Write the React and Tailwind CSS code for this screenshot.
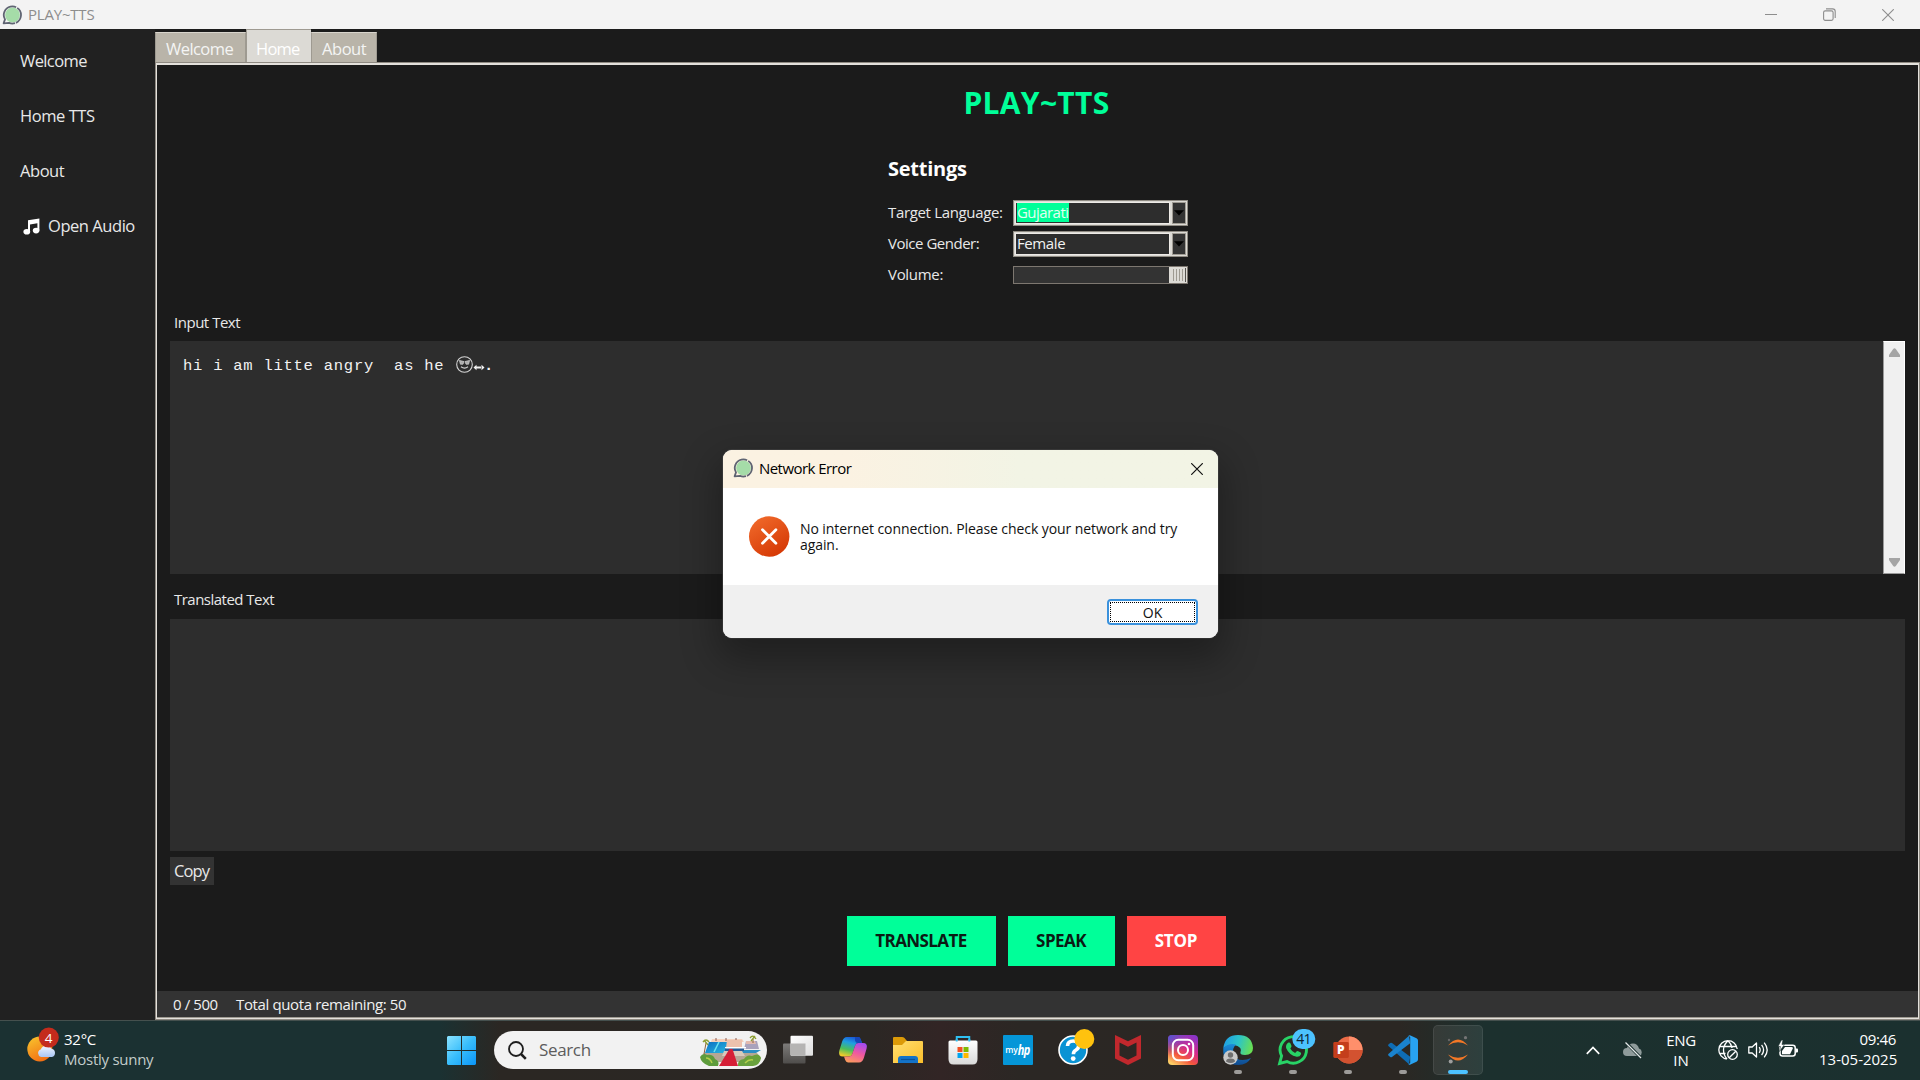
import React from "react";

const AppIcon = ({ className }) => (
  <svg viewBox="0 0 20 20" className={className}>
    <circle cx="10.5" cy="10" r="7.4" fill="#a5dca8" />
    <path d="M1.6 18.3 3 14.4A8.6 8.6 0 1 1 7 17.9Z" fill="none" stroke="#5f6472" strokeWidth="1.8" strokeLinejoin="round" strokeDasharray="26 1.2 18 1" />
  </svg>
);

const TitleBar = () => (
  <header className="flex h-[29px] items-center bg-[#f3f3f3] text-[#8d8d8d]">
    <AppIcon className="ml-[2px] h-5 w-5 shrink-0" />
    <span className="-mt-[2px] ml-[6px] text-[15px] leading-5 tracking-[-0.2px]">PLAY~TTS</span>
    <div className="ml-auto flex items-center">
      <svg className="mr-[46px] h-3 w-3" viewBox="0 0 12 12" stroke="#8d8d8d"><path d="M0 5.5h12" /></svg>
      <svg className="mr-[46px] h-[13px] w-[13px]" viewBox="0 0 13 13" fill="none" stroke="#8d8d8d" strokeWidth="1.1">
        <rect x="0.6" y="2.9" width="9.5" height="9.5" rx="1.6" />
        <path d="M3 .9h6.6a2.6 2.6 0 0 1 2.6 2.6V10" />
      </svg>
      <svg className="mr-[26px] h-3 w-3" viewBox="0 0 12 12" stroke="#8d8d8d" strokeWidth="1.1"><path d="M.2.2l11.6 11.6M11.8.2.2 11.8" /></svg>
    </div>
  </header>
);

const Sidebar = () => (
  <nav className="flex w-[155px] shrink-0 flex-col bg-[#212121] pl-5 pt-[5px] text-[16.5px] text-[#e8e8e8]">
    <div className="flex h-[55px] items-center tracking-[-0.6px]">Welcome</div>
    <div className="flex h-[55px] items-center tracking-[-0.45px]">Home TTS</div>
    <div className="flex h-[55px] items-center tracking-[-0.45px]">About</div>
    <div className="flex h-[55px] items-center tracking-[-0.45px]">
      <svg className="-mt-px ml-[3px] h-[17px] w-[17px]" viewBox="0 0 17 17" fill="#fff">
        <path d="M5 2.2 16.4.4v12.2h-2V5.2L7 6.4v7.4H5z" />
        <ellipse cx="3.8" cy="13.8" rx="3.4" ry="2.8" />
        <ellipse cx="13.1" cy="12.6" rx="3.3" ry="2.8" />
      </svg>
      <span className="ml-[8px]">Open Audio</span>
    </div>
  </nav>
);

const Tabs = () => (
  <div className="flex h-[33px] items-end text-[16.5px] leading-6 text-[#f4f4f4]">
    <div className="flex h-[30px] w-[91px] items-center border border-b-0 border-[#9e9a91] border-t-[#d8d4cc] bg-[#b9b4a9] pl-[10px] pt-[3px] tracking-[-0.55px]">Welcome</div>
    <div className="flex h-[33px] w-[65px] items-center border-l border-t border-[#9e9a91] bg-[#dcdad5] pl-[9px] pt-[6px] tracking-[-0.75px] text-white">Home</div>
    <div className="flex h-[30px] w-[66px] items-center border border-b-0 border-[#9e9a91] border-t-[#d8d4cc] bg-[#b9b4a9] pl-[10px] pt-[3px] tracking-[-0.45px]">About</div>
  </div>
);

const Combo = ({ children }) => (
  <div className="flex h-[26px] w-[175px] border border-[#8f8b83] bg-[#dcdad5]">
    <div className="m-px mr-0 flex w-[155px] items-center border border-[#eeebe7] bg-[#2d2d2d] pl-px text-[15px] leading-[19px] text-[#f2f2f2]">{children}</div>
    <div className="my-px ml-[2px] flex w-[14px] items-center justify-center border border-[#a09c94] bg-[#333]">
      <svg className="h-[6px] w-[10px] shrink-0" viewBox="0 0 10 6"><path d="M0 .3h10L5 5.5z" fill="#000" /></svg>
    </div>
  </div>
);

const Settings = () => (
  <section className="ml-[731px] mt-[33px] w-[301px] text-[#e8e8e8]">
    <h2 className="flex h-7 items-center text-xl font-bold tracking-[-0.25px] text-white">Settings</h2>
    <div className="mt-[14px] text-[15px]">
      <div className="flex h-[31px] items-center">
        <div className="w-[125px] tracking-[-0.34px]">Target Language:</div>
        <Combo><span className="whitespace-nowrap bg-[#00ff99] pr-px tracking-[-0.55px] text-[#e2fff2]">Gujarati</span></Combo>
      </div>
      <div className="flex h-[31px] items-center">
        <div className="w-[125px] tracking-[-0.48px]">Voice Gender:</div>
        <Combo><span className="tracking-[-0.4px]">Female</span></Combo>
      </div>
      <div className="flex h-[31px] items-center">
        <div className="w-[125px] tracking-[-0.3px]">Volume:</div>
        <div className="flex h-[18px] w-[175px] justify-end border border-[#7d7770] bg-[#333]">
          <svg className="h-4 w-[18px]" viewBox="0 0 18 16">
            <rect width="18" height="16" fill="#dcdad5" />
            <path d="M4.5 2v12M7.5 2v12M10.5 2v12M13.5 2v12" stroke="#9e9a91" />
            <path d="M16.5 1v14" stroke="#55524d" />
          </svg>
        </div>
      </div>
    </div>
  </section>
);

const InputArea = () => (
  <div className="mt-[8px] flex h-[233px] bg-[#2d2d2d]">
    <div className="flex flex-1 items-start whitespace-pre pl-[13px] pt-[15px] font-['Liberation_Mono',monospace] text-[15.5px] leading-5 text-[#f2f2f2]">
      <span className="w-[273px] tracking-[0.75px]">{"hi i am litte angry  as he"}</span>
      <svg className="h-[17px] w-[17px]" viewBox="0 0 17 17" fill="none" stroke="#d4d4d4" strokeWidth="1.1">
        <circle cx="8.5" cy="8.5" r="7.8" />
        <path d="M3.400 4.400 8 5.600 7 8.200H4.400zM13.600 4.400 9 5.600l1 2.600h2.600z" fill="#aaa" strokeWidth=".7" />
        <path d="M5 10.800q3.500 2.600 7 0" />
      </svg>
      <svg className="mt-[8px] h-[7px] w-[12px]" viewBox="0 0 12 7" fill="#f2f2f2"><path d="M.5 3.500 3.500.8v5.400zM11.500 3.500 8.500.8v5.400zM3 2.600h6v1.800H3z" /></svg>
      <span className="-ml-px font-bold">.</span>
    </div>
    <div className="flex w-[22px] flex-col items-center justify-between border border-b-[#9a9a9a] border-l-[#9a9a9a] border-r-white border-t-white bg-[#f0f0f0] py-[6px]">
      <svg className="h-[9px] w-[11px]" viewBox="0 0 11 9" fill="#a5a5a5"><path d="M4.2 1Q5.5-.6 6.8 1L11 7v2H0V7z" /></svg>
      <svg className="h-[9px] w-[11px] rotate-180" viewBox="0 0 11 9" fill="#a5a5a5"><path d="M4.2 1Q5.5-.6 6.8 1L11 7v2H0V7z" /></svg>
    </div>
  </div>
);

const Notebook = () => (
  <main className="flex flex-1 flex-col bg-[#1b1b1b]">
    <Tabs />
    <div className="flex flex-1 flex-col border border-[#8f8a82]">
      <div className="flex flex-1 flex-col border border-t-2 border-[#e4e1dc]">
        <div className="flex flex-1 flex-col border-b border-[#9e9a91]">
          <h1 className="mr-[2px] mt-[17px] flex h-10 items-center justify-center text-[30px] font-bold tracking-[0.3px] text-[#00ff99]">PLAY~TTS</h1>
          <Settings />
          <div className="mx-[13px] flex flex-col text-[15px] text-[#e8e8e8]">
            <div className="ml-1 mt-[21px] flex h-[22px] items-center tracking-[-0.48px]">Input Text</div>
            <InputArea />
            <div className="ml-1 mt-[14px] flex h-[22px] items-center tracking-[-0.52px]">Translated Text</div>
            <div className="mt-[9px] h-[232px] bg-[#2d2d2d]" />
            <button className="mt-[6px] flex h-7 w-11 items-center bg-[#333] pl-1 text-[16.5px] tracking-[-0.85px]">Copy</button>
          </div>
          <div className="mr-[3px] mt-[31px] flex h-[50px] justify-center gap-3 text-[17px] font-bold text-[#0b1a14]">
            <button className="flex w-[149px] items-center justify-center bg-[#00ff99] tracking-[-0.58px]">TRANSLATE</button>
            <button className="flex w-[107px] items-center justify-center bg-[#00ff99] tracking-[-0.55px]">SPEAK</button>
            <button className="flex w-[99px] items-center justify-center bg-[#ff4444] tracking-[-0.2px] text-white">STOP</button>
          </div>
          <footer className="mt-auto flex h-[26px] items-center bg-[#333] pl-[16px] text-[15px] text-[#f0f0f0]">
            <span className="w-[63px] tracking-[-0.4px]">0 / 500</span>
            <span className="tracking-[-0.37px]">Total quota remaining: 50</span>
          </footer>
        </div>
      </div>
    </div>
  </main>
);

const Dialog = () => (
  <div role="dialog" className="absolute left-[723px] top-[450px] flex h-[188px] w-[495px] flex-col overflow-hidden rounded-[9px] bg-white text-[#111] shadow-[0_16px_36px_6px_rgba(0,0,0,0.3),0_0_0_1px_rgba(70,70,70,0.7)]">
    <div className="flex h-[38px] items-center bg-gradient-to-r from-[#fbf2e2] from-25% to-[#f2f4e5] to-60% pl-[10px] pr-[15px] text-[15px]">
      <AppIcon className="-mt-[2px] h-5 w-5" />
      <span className="-mt-[2px] ml-[6px] tracking-[-0.55px] text-black">Network Error</span>
      <svg className="ml-auto h-3 w-3" viewBox="0 0 12 12" stroke="#111" strokeWidth="1.2"><path d="M.2.2l11.6 11.6M11.8.2.2 11.8" /></svg>
    </div>
    <div className="flex h-[97px] pl-[26px] pt-[28px]">
      <svg className="h-[41px] w-[41px]" viewBox="0 0 41 41">
        <defs><linearGradient id="err" x1="0.2" y1="0" x2="0.8" y2="1"><stop stopColor="#f0692a" /><stop offset="1" stopColor="#d43603" /></linearGradient></defs>
        <circle cx="20.2" cy="20.5" r="20.2" fill="url(#err)" />
        <path d="M13.500 13.800l13.400 13.400M26.900 13.800 13.500 27.200" stroke="#fff" strokeWidth="2.800" strokeLinecap="round" />
      </svg>
      <p className="ml-[10px] mt-[5px] whitespace-nowrap text-[14px] leading-4 tracking-[-0.08px]">
        No internet connection. Please check your network and try<br />again.
      </p>
    </div>
    <div className="flex flex-1 justify-end bg-[#f0f0f0] pr-5 pt-[14px]">
      <button className="h-[26px] w-[91px] rounded-[4px] border-2 border-[#3a91dc] bg-white p-px">
        <div className="flex h-full items-center justify-center border border-dotted border-black text-[14px]">OK</div>
      </button>
    </div>
  </div>
);

const Weather = () => (
  <div className="flex w-[447px] items-center pl-[26px]">
    <svg className="-mt-[3px] h-[38px] w-[34px] overflow-visible" viewBox="0 0 34 38">
      <defs>
        <linearGradient id="sun" x1=".2" y1="0" x2=".7" y2="1"><stop stopColor="#f8c12c" /><stop offset="1" stopColor="#f26a12" /></linearGradient>
        <linearGradient id="cl" x1="0" y1="0" x2="0" y2="1"><stop stopColor="#f1f6ff" /><stop offset="1" stopColor="#a9c6f5" /></linearGradient>
      </defs>
      <circle cx="13.800" cy="19" r="12.500" fill="url(#sun)" />
      <path d="M15 27a4 4 0 0 1-.3-7.600 6 6 0 0 1 10.800-.6 4.200 4.200 0 0 1 .4 8.200z" fill="url(#cl)" />
      <circle cx="22.800" cy="7.600" r="10" fill="#c42b1c" />
      <text x="22.500" y="12.600" textAnchor="middle" fontSize="13.500" fill="#fff" fontFamily="Open Sans">4</text>
    </svg>
    <div className="-mt-[3px] ml-[4px] text-[15px] leading-5 text-white">
      <div className="tracking-[-0.25px]">32°C</div>
      <div className="tracking-[-0.26px] text-[#c3cccb]">Mostly sunny</div>
    </div>
  </div>
);

const Start = () => (
  <svg className="h-[29px] w-[29px] shrink-0" viewBox="0 0 29 29">
    <defs><linearGradient id="win" x1="0" y1="0" x2="1" y2="1"><stop stopColor="#8be3ff" /><stop offset=".5" stopColor="#38bdfb" /><stop offset="1" stopColor="#0a95f8" /></linearGradient></defs>
    <path d="M1 0h13v14H0V1zM15 0h13l1 1v13H15zM0 15h14v14H1l-1-1zM15 15h14v13l-1 1H15z" fill="url(#win)" />
  </svg>
);

const Villa = () => (
  <svg className="h-[31px] w-[62px]" viewBox="0 0 62 31">
    <defs><linearGradient id="gl" x1="0" y1="0" x2="1" y2="1"><stop stopColor="#0a6fc2" /><stop offset="1" stopColor="#2bb6e0" /></linearGradient></defs>
    <path d="M4 18h53l4 5-5 4H8l-6-5z" fill="#b5a796" />
    <path d="M12 4h30l2 3H11z" fill="#f4d0bc" /><path d="M16 3v3M26 3v3M36 3v3" stroke="#8a5a50" />
    <path d="M9 7h18v5l-3 6H5z" fill="url(#gl)" /><path d="M19 7l-5 10" stroke="#6be4f1" strokeWidth="1.500" />
    <path d="M27 5h15v8H26z" fill="#edc1ad" /><path d="M46 6h11l2 8H44z" fill="#a9a2bc" /><path d="M46 6h9l1 3H46z" fill="#e3b9ae" /><path d="M38 15h23l-5 3H40z" fill="#2a8fc6" />
    <path d="M25 12h21v1.500H25z" fill="#fff" /><path d="M25 13.500h19V16H25z" fill="#285a94" />
    <path d="M24 16h18l3 5H22z" fill="#d8cabb" />
    <path d="M29.500 14h3L38 31H19z" fill="#d61f36" />
    <path d="M0 22q3-5 7-2 6-1 8 4 5 2 3 7H9Q1 28 0 22z" fill="#5e9c3c" /><path d="M38 31q-1-6 6-7 3-5 8-3 7-4 9 2-1 7-8 8z" fill="#69a13c" />
    <path d="M6 23q4 0 6 5M45 28q4-4 8-3" stroke="#b3cf4b" fill="none" strokeWidth="1.500" />
    <path d="M6 8 4 19M53 4v4" stroke="#8a6440" /><path d="M3 7q3-4 6 0M4 5l4 5M50 3q3-4 6 1M51 6l4-5" stroke="#8c9e31" strokeWidth="1.300" fill="none" />
  </svg>
);

const Cell = ({ children, run }) => (
  <div className="relative flex w-[55px] items-center justify-center">
    {children}
    {run && <div className="absolute bottom-[6px] h-1 w-2 rounded-full bg-[#9d9b99]" />}
  </div>
);

const box = "-mt-px h-[30px] w-[30px] overflow-visible";

const Apps = () => (
  <>
    <Cell>
      <svg className={box} viewBox="0 0 30 30">
        <defs>
          <linearGradient id="tv" x1="0" y1="0" x2="1" y2="1"><stop stopColor="#fff" /><stop offset="1" stopColor="#dedede" /></linearGradient>
          <linearGradient id="tb" x1="0" y1="0" x2="0" y2="1"><stop stopColor="#7d7b79" /><stop offset="1" stopColor="#4f4d4b" /></linearGradient>
        </defs>
        <rect x="0" y="8.500" width="22.500" height="20" rx="1" fill="url(#tb)" />
        <rect x="7.500" y=".7" width="22.500" height="20" rx="1" fill="url(#tv)" />
        <path d="M7.500 8.500H22.500v12.200H8.500l-1-1z" fill="#b5b4b3" />
      </svg>
    </Cell>
    <Cell>
      <svg className={box} viewBox="0 0 30 30">
        <defs>
          <linearGradient id="c1" x1=".6" y1="0" x2=".3" y2="1"><stop stopColor="#1a58d8" /><stop offset=".3" stopColor="#1f9fe0" /><stop offset=".65" stopColor="#4bbf5a" /><stop offset="1" stopColor="#f6c92a" /></linearGradient>
          <linearGradient id="c2" x1=".7" y1="0" x2=".3" y2="1"><stop stopColor="#a44bf0" /><stop offset=".5" stopColor="#f0599f" /><stop offset="1" stopColor="#fb9a5e" /></linearGradient>
        </defs>
        <path d="M13 2h7q2 0 2.800 2.400L24 8h-4q-2 0-3 3l-2.500 7.500Q13.600 21.500 11 21.500H5Q0 21.500 1.200 16L4 7Q5.500 2 9 2z" fill="url(#c1)" />
        <path d="M17 2h3q2 0 2.800 2.400L24 8h-4q-2.500 0-3-2.500z" fill="#1646b8" />
        <path d="M17 27.500h-7q-2 0-2.800-2.400L6 21.500h5q2.500 0 3.400-3L17 11q1-3 3.500-3H25q5 0 3.600 5.500L26 22.500q-1.500 5-5 5z" fill="url(#c2)" />
      </svg>
    </Cell>
    <Cell>
      <svg className={box} viewBox="0 0 30 30">
        <defs><linearGradient id="fo" x1="0" y1="0" x2="1" y2="1"><stop stopColor="#ffdf70" /><stop offset="1" stopColor="#fcbe2b" /></linearGradient></defs>
        <path d="M0 3q0-1 1-1h8q1.500 0 2.500 1L14 6v6H0z" fill="#dc9a08" />
        <path d="M0 10h9l4-4h16q1 0 1 1v21H0z" fill="url(#fo)" />
        <path d="M5 28v-4q0-3 3-3h14q3 0 3 3v4z" fill="#1473c8" /><path d="M8 24.500h14" stroke="#0b5299" strokeWidth="1.200" />
      </svg>
    </Cell>
    <Cell>
      <svg className={box} viewBox="0 0 30 30">
        <defs><linearGradient id="st" x1="0" y1="0" x2="0" y2="1"><stop stopColor="#fff" /><stop offset="1" stopColor="#d9d9d9" /></linearGradient></defs>
        <path d="M8.700 7V2h12.600v5" stroke="#2fc0f2" strokeWidth="1.900" fill="none" />
        <path d="M.5 7q0-1.500 1.500-1.500h26Q29.500 5.500 29.500 7v17q0 5.500-5 5.500h-19Q.5 29.500.5 24z" fill="url(#st)" />
        <path d="M7.750 6.500V4h1.900v2.500M20.350 6.500V4h1.900v2.500" fill="#2fc0f2" />
        <path d="M9.500 12h5v5h-5z" fill="#f25022" /><path d="M15.500 12h5v5h-5z" fill="#7fba00" /><path d="M9.500 18h5v5h-5z" fill="#00a4ef" /><path d="M15.500 18h5v5h-5z" fill="#ffb900" />
      </svg>
    </Cell>
    <Cell>
      <div className="-mt-px flex h-[30px] w-[30px] items-center justify-center rounded-[1px] bg-[#0596d8] text-white">
        <span className="text-[8.5px] font-semibold tracking-[-0.2px]">my</span>
        <span className="inline-block origin-center scale-y-[1.25] text-[11px] font-bold italic tracking-[-0.6px]">hp</span>
      </div>
    </Cell>
    <Cell>
      <svg className={box} viewBox="0 0 30 30">
        <circle cx="15" cy="15" r="14" fill="#0a93d4" stroke="#fff" strokeWidth="1.600" />
        <path d="M9.500 11q.3-5 5.700-5 5.500 0 5.500 4.700 0 2.800-3 4.500-2.300 1.300-2.300 4" stroke="#fff" strokeWidth="3.600" fill="none" /><circle cx="15.200" cy="23.600" r="2.400" fill="#fff" />
        <circle cx="26.300" cy="4" r="10" fill="#ffc20e" />
      </svg>
    </Cell>
    <Cell>
      <svg className={box} viewBox="0 0 30 30"><path d="M2 0 15 6.300 28 0v23.500L15 30 2 23.500zM6.500 7.500v13L15 24.800l8.500-4.300v-13L15 11.700z" fill="#c1282d" fillRule="evenodd" /></svg>
    </Cell>
    <Cell>
      <svg className={box} viewBox="0 0 30 30">
        <defs>
          <linearGradient id="i1" x1=".8" y1="0" x2=".2" y2="1"><stop stopColor="#8a35c8" /><stop offset=".4" stopColor="#d62a8b" /><stop offset=".7" stopColor="#f4563c" /><stop offset="1" stopColor="#fdd067" /></linearGradient>
          <radialGradient id="i2" cx="0" cy="0" r=".7"><stop stopColor="#4a58d8" /><stop offset="1" stopColor="#4a58d8" stopOpacity="0" /></radialGradient>
        </defs>
        <rect width="30" height="30" rx="4" fill="url(#i1)" /><rect width="30" height="30" rx="4" fill="url(#i2)" />
        <rect x="4.800" y="4.800" width="20.400" height="20.400" rx="5.500" fill="none" stroke="#fff" strokeWidth="2" />
        <circle cx="15" cy="15" r="5" fill="none" stroke="#fff" strokeWidth="2" /><circle cx="21" cy="9" r="1.300" fill="#fff" />
      </svg>
    </Cell>
    <Cell run>
      <svg className={box} viewBox="0 0 30 30">
        <defs>
          <linearGradient id="e1" x1="0" y1=".3" x2="1" y2=".5"><stop stopColor="#1f9de6" /><stop offset=".5" stopColor="#2cc4c8" /><stop offset="1" stopColor="#69e052" /></linearGradient>
          <linearGradient id="e2" x1="0" y1="0" x2="0" y2="1"><stop stopColor="#1b8ddb" /><stop offset="1" stopColor="#0f4a8f" /></linearGradient>
        </defs>
        <path d="M.3 13Q2 0 15 0q14 0 15 13 0 7-8 7-5.500 0-4.500-3 1.500-4-3-6Q7 8 .3 13z" fill="url(#e1)" />
        <path d="M.3 13Q6 7.500 13 9.500 9 13 10.500 19q2 6 9 6 4.500 0 8.500-2-4 7-12.500 7Q-1 29.500.3 13z" fill="url(#e2)" />
        <circle cx="7.500" cy="22.500" r="7.200" fill="#c9c9c9" /><circle cx="7.500" cy="20" r="2.700" fill="#6f6f6f" /><path d="M3 26.500q0-3 4.500-3t4.500 3q-4 3-9 0z" fill="#6f6f6f" />
      </svg>
    </Cell>
    <Cell run>
      <svg className={box} viewBox="0 0 30 30">
        <path d="M1.600 28.400 3.600 21A13.200 13.200 0 1 1 9 26.500z" fill="none" stroke="#28d366" strokeWidth="2.900" />
        <path d="M10.500 7.500q1.300-.4 2 1l1 2.600q.2.900-1.200 2.400 1.600 3.200 4.800 4.500l1.700-1.700q.6-.5 1.400-.1l2.500 1.300q.6.500.3 1.800-1 2.700-4.300 2.500-7.500-1.400-10.600-8.800-.6-3.700 2.400-5.500z" fill="#28d366" />
        <rect x="14.300" y="-6" width="23" height="20" rx="10" fill="#4cc2ff" />
        <text x="25.500" y="9" textAnchor="middle" fontSize="14" letterSpacing="-0.8" fill="#0b2333" fontFamily="Open Sans">41</text>
      </svg>
    </Cell>
    <Cell run>
      <svg className={box} viewBox="0 0 30 30">
        <circle cx="16" cy="15" r="13.600" fill="#ed6c47" /><path d="M16 1.400A13.600 13.600 0 0 1 29.600 15H16z" fill="#ff8f6b" /><path d="M2.400 15h27.200a13.600 13.600 0 0 1-27.200 0z" fill="#d35230" />
        <rect x=".3" y="7" width="15.500" height="16" rx="1.400" fill="#c43e1c" />
        <text x="7.800" y="19.300" textAnchor="middle" fontSize="12" fontWeight="800" fill="#fff" fontFamily="Open Sans">P</text>
      </svg>
    </Cell>
    <Cell run>
      <svg className={box} viewBox="0 0 30 30">
        <path d="M2.200 8 .4 9.500q-.7.800 0 1.600L21 29.200l1.200-7.400L4 8q-1-.7-1.800 0z" fill="#0e6cb4" />
        <path d="M2.200 22 .4 20.500q-.7-.8 0-1.600L21 .8l1.200 7.400L4 22q-1 .7-1.800 0z" fill="#1a83ce" />
        <path d="M20.500.8Q21.300 0 22.500.4l6 2.900Q30 4 30 5.500v19q0 1.500-1.500 2.200l-6 2.900q-1.200.5-2-.4l1.700-1.200V2z" fill="#28a3f2" />
      </svg>
    </Cell>
    <div className="relative flex w-[55px] items-center justify-center">
      <div className="-mt-px flex h-[50px] w-[50px] items-center justify-center rounded-[5px] border border-white/8 bg-white/8">
        <svg className={box} viewBox="0 0 30 30">
          <path d="M5 10.500Q15-1.500 25 10.500 15 4 5 10.500zM5 19.500Q15 31.500 25 19.500 15 26 5 19.500z" fill="#f37726" />
          <circle cx="22.500" cy="2.700" r="1.600" fill="#757575" /><circle cx="6" cy="5" r="1.200" fill="#666" /><circle cx="7.700" cy="26.500" r="2" fill="#9e9e9e" />
        </svg>
      </div>
      <div className="absolute bottom-[6px] h-1 w-5 rounded-full bg-[#4cc2ff]" />
    </div>
  </>
);

const Tray = () => (
  <div className="ml-auto flex items-center pr-6 text-[15px] leading-5 text-white">
    <svg className="-mt-px h-[9px] w-[14px]" viewBox="0 0 14 9" fill="none" stroke="#fff" strokeWidth="1.700"><path d="M.8 7.800 7 1.500l6.200 6.300" /></svg>
    <svg className="-mt-px ml-[23px] h-[18px] w-5" viewBox="0 0 20 18">
      <path d="M4 15a4 4 0 0 1 0-8Q5.500 2.500 10 2.500T16 7.500a4 4 0 0 1 .3 7.500z" fill="#8f9b9b" /><path d="M2.500 1 18 17" stroke="#1b302f" strokeWidth="3" /><path d="M2.500 1.500 18 17" stroke="#e5e9e9" strokeWidth="1.200" />
    </svg>
    <div className="-mt-[2px] ml-[23px] w-[30px] text-center"><div className="tracking-[-0.3px]">ENG</div><div>IN</div></div>
    <svg className="-mt-px ml-[22px] h-5 w-5" viewBox="0 0 20 20" fill="none" stroke="#fff" strokeWidth="1.300">
      <path d="M9 19A9.200 9.200 0 1 1 19.200 9M1.500 6.500h17M1.500 13.500h6M9 19Q5.500 15 5.500 10T10 .8Q13.500 4 14 8" />
      <circle cx="14.500" cy="14.500" r="4.800" /><path d="M11.200 17.800l6.600-6.600" />
    </svg>
    <svg className="-mt-px ml-[10px] h-[18px] w-5" viewBox="0 0 20 18" fill="none" stroke="#fff" strokeWidth="1.300" strokeLinejoin="round">
      <path d="M.8 6v6h3.400l4.300 4V2L4.200 6zM11.200 6.200q2 2.800 0 5.600M13.600 3.800q4 5.200 0 10.400M16.200 1.600q6 7.400 0 14.800" />
    </svg>
    <svg className="-mt-[3px] ml-[10px] h-[18px] w-5" viewBox="0 0 20 18">
      <rect x="2" y="5.200" width="15.200" height="10.800" rx="2.500" fill="none" stroke="#fff" strokeWidth="1.500" /><path d="M18 8.500h1q1 0 1 1v2q0 1-1 1h-1z" fill="#fff" />
      <path d="M7 7h6.500q2 0 1.300 1.500L12 14.200H4V11z" fill="#fff" /><path d="M3.500 0 0 6.500h2.500L1.500 11.500 6.500 4.500H4L5 0z" fill="#fff" stroke="#1b302f" strokeWidth=".6" />
    </svg>
    <div className="-mt-[3px] ml-[21px] w-[77px] whitespace-nowrap text-right"><div className="tracking-[-0.35px]">09:46</div><div>13-05-2025</div></div>
  </div>
);

const Taskbar = () => (
  <footer className="flex h-[60px] border-t border-[#45504e] bg-linear-[90deg,#1b3132_0px,#1b3132_440px,#2b2723_500px,#2b2724_870px,#322525_940px,#2b2724_1020px,#2b2723_1400px,#1c302e_1485px,#1b302f_100%]">
    <Weather />
    <div className="flex items-center"><Start /></div>
    <div className="mb-auto ml-[18px] mr-[3px] mt-[10px] flex h-[38px] w-[273px] items-center rounded-full bg-[#f2f2f2] pl-[14px] pr-[5px]">
      <svg className="h-[19px] w-[19px]" viewBox="0 0 19 19" fill="none" stroke="#1e1e1e"><circle cx="8" cy="8" r="7" strokeWidth="1.800" /><path d="M13 13l4.800 4.800" strokeWidth="2.500" /></svg>
      <span className="ml-[12px] text-[17px] tracking-[-0.35px] text-[#5c5c5c]">Search</span>
      <div className="ml-auto"><Villa /></div>
    </div>
    <Apps />
    <Tray />
  </footer>
);

export default function App() {
  return (
    <div className="relative flex h-[1080px] w-[1920px] flex-col overflow-hidden bg-[#1b1b1b] font-['Open_Sans',sans-serif]">
      <TitleBar />
      <div className="flex flex-1">
        <Sidebar />
        <Notebook />
      </div>
      <Taskbar />
      <Dialog />
    </div>
  );
}
